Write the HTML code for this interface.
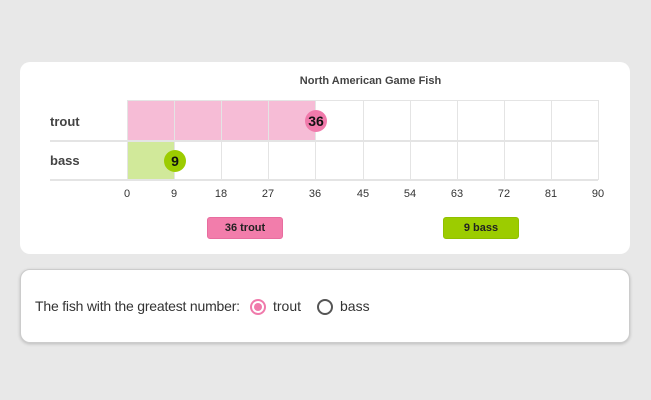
<!DOCTYPE html>
<html><head><style>
body{margin:0;width:651px;height:400px;background:#e8e8e8;font-family:"Liberation Sans",Arial,sans-serif;position:relative;overflow:hidden}
.a{position:absolute}
.card{background:#fff;border-radius:10px}
.v{position:absolute;top:100px;height:80px;width:1px;background:#e4e4e4}
.t{position:absolute;top:188px;font-size:11px;color:#333;width:30px;text-align:center}
</style></head><body>
<div class="a card" style="left:20px;top:62px;width:610px;height:192px"></div>
<div class="a" style="left:135px;top:75px;width:471px;text-align:center;font-size:11px;font-weight:bold;color:#444">North American Game Fish</div>
<div class="a" style="left:127px;top:101px;width:189px;height:39px;background:#f6bcd6"></div>
<div class="a" style="left:127px;top:141px;width:48px;height:39px;background:#d1e99a"></div>
<div class="v" style="left:127px"></div><div class="v" style="left:174px"></div><div class="v" style="left:221px"></div><div class="v" style="left:268px"></div><div class="v" style="left:315px"></div><div class="v" style="left:363px"></div><div class="v" style="left:410px"></div><div class="v" style="left:457px"></div><div class="v" style="left:504px"></div><div class="v" style="left:551px"></div><div class="v" style="left:598px"></div>
<div class="a" style="left:127px;top:100px;width:471px;height:1px;background:#e4e4e4"></div>
<div class="a" style="left:50px;top:140px;width:548px;height:2px;background:#e4e4e4"></div>
<div class="a" style="left:50px;top:179px;width:548px;height:2px;background:#e4e4e4"></div>
<div class="a" style="left:50px;top:114px;font-size:13px;font-weight:bold;color:#444">trout</div>
<div class="a" style="left:50px;top:153px;font-size:13px;font-weight:bold;color:#444">bass</div>
<div class="a" style="left:305px;top:110px;width:22px;height:22px;border-radius:50%;background:#f07aab;font-size:14px;font-weight:bold;text-align:center;line-height:22px;color:#111">36</div>
<div class="a" style="left:164px;top:150px;width:22px;height:22px;border-radius:50%;background:#9ccc00;font-size:14px;font-weight:bold;text-align:center;line-height:22px;color:#111">9</div>
<div class="t" style="left:112px">0</div><div class="t" style="left:159px">9</div><div class="t" style="left:206px">18</div><div class="t" style="left:253px">27</div><div class="t" style="left:300px">36</div><div class="t" style="left:348px">45</div><div class="t" style="left:395px">54</div><div class="t" style="left:442px">63</div><div class="t" style="left:489px">72</div><div class="t" style="left:536px">81</div><div class="t" style="left:583px">90</div>
<div class="a" style="left:207px;top:217px;width:74px;height:20px;border:1px solid #e86d9f;border-radius:3px;background:#f27dab;font-size:11px;font-weight:bold;text-align:center;line-height:20px;color:#222">36 trout</div>
<div class="a" style="left:443px;top:217px;width:74px;height:20px;border:1px solid #90c000;border-radius:3px;background:#9ccc00;font-size:11px;font-weight:bold;text-align:center;line-height:20px;color:#222">9 bass</div>
<div class="a card" style="left:20px;top:269px;width:608px;height:72px;border:1px solid #ccc;box-shadow:0 1px 3px rgba(0,0,0,.2)"></div>
<div class="a" style="left:35px;top:298px;font-size:14px;color:#333;letter-spacing:-0.2px">The fish with the greatest number:</div>
<div class="a" style="left:250px;top:299px;width:12px;height:12px;border:2px solid #f07aab;border-radius:50%"></div>
<div class="a" style="left:254px;top:303px;width:8px;height:8px;background:#f07aab;border-radius:50%"></div>
<div class="a" style="left:273px;top:298px;font-size:14px;color:#333">trout</div>
<div class="a" style="left:317px;top:299px;width:12px;height:12px;border:2px solid #555;border-radius:50%"></div>
<div class="a" style="left:340px;top:298px;font-size:14px;color:#333">bass</div>
</body></html>
